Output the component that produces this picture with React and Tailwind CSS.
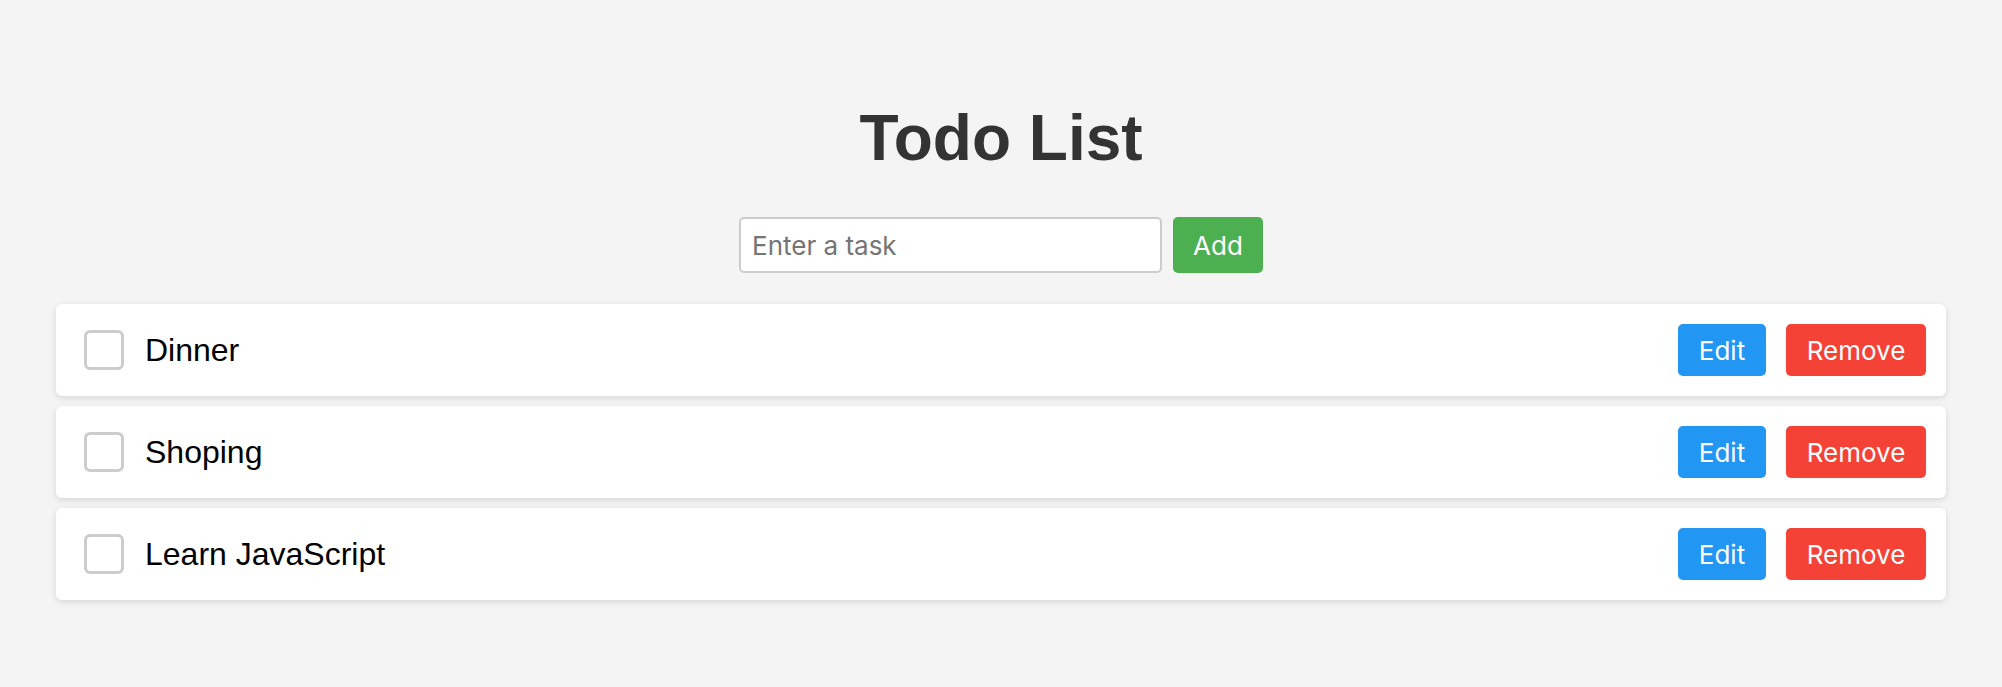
import React from "react";

const items = ["Dinner", "Shoping", "Learn JavaScript"];

export default function App() {
  return (
    <div className="min-h-[687px] w-full bg-[#f4f4f4] pt-[101px] pb-[60px]">
      <h1
        className="text-center text-[64px] leading-[74px] font-bold text-[#333333]"
        style={{ fontFamily: '"Liberation Sans", Arial, sans-serif' }}
      >
        Todo List
      </h1>
      <div className="mt-[42px] flex justify-center gap-[11px]">
        <input
          type="text"
          placeholder="Enter a task"
          className="h-[56px] w-[423px] rounded-[5px] border-2 border-[#cccccc] bg-white px-[11px] text-[26px] text-[#333] placeholder:text-[#757575] outline-none"
          style={{ fontFamily: 'Inter, "Noto Sans", sans-serif' }}
        />
        <button
          className="h-[56px] w-[90px] rounded-[5px] bg-[#4caf50] text-[26px] text-white"
          style={{ fontFamily: 'Inter, "Noto Sans", sans-serif' }}
        >
          Add
        </button>
      </div>
      <ul className="mx-[56px] mt-[31px] flex flex-col gap-[10px]">
        {items.map((t) => (
          <li
            key={t}
            className="flex h-[92px] items-center rounded-[6px] bg-white pl-[28px] pr-[20px] shadow-[0_2px_6px_rgba(0,0,0,0.12)]"
          >
            <div className="h-[40px] w-[40px] shrink-0 rounded-[6px] border-[3px] border-[#cccccc] bg-white" />
            <span
              className="ml-[21px] flex-1 text-[32px] text-black"
              style={{ fontFamily: '"Liberation Sans", Arial, sans-serif' }}
            >
              {t}
            </span>
            <div
              className="flex gap-[20px]"
              style={{ fontFamily: 'Inter, "Noto Sans", sans-serif' }}
            >
              <button className="h-[52px] w-[88px] rounded-[5px] bg-[#2196f3] text-[26px] text-white">
                Edit
              </button>
              <button className="h-[52px] w-[140px] rounded-[5px] bg-[#f44336] text-[26px] text-white">
                Remove
              </button>
            </div>
          </li>
        ))}
      </ul>
    </div>
  );
}
